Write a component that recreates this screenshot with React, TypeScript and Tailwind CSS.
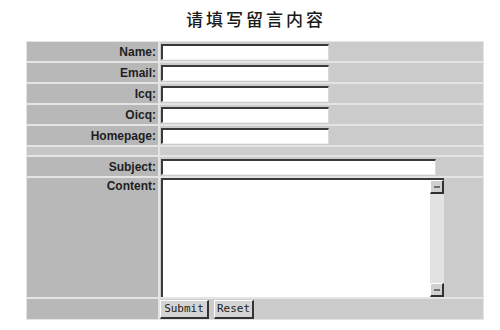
import React from "react";

const fields = ["Name", "Email", "Icq", "Oicq", "Homepage"];

function Label({ text }: { text: string }) {
  return (
    <div className="bg-[#b8b8b8] flex items-center justify-end pr-[2px] text-[12px] font-bold text-[#1e1e1e]">
      {text}:
    </div>
  );
}

function TextBox({ width }: { width: string }) {
  return (
    <div
      className={`${width} h-[16px] bg-white border-t-2 border-l-2 border-t-[#3a3a3a] border-l-[#3a3a3a] border-r border-b border-r-[#d8d8d8] border-b-[#f0f0f0]`}
    />
  );
}

function ScrollArrow({ up }: { up?: boolean }) {
  return (
    <div className="w-[14px] h-[14px] bg-[#d0d0d0] border-r-2 border-b-2 border-[#303030] border-t border-l border-t-white border-l-white flex items-center justify-center">
      <div className={`w-[6px] h-[2px] bg-[#707070] ${up ? "" : "mt-[1px]"}`} />
    </div>
  );
}

export default function App() {
  return (
    <div
      className="w-[500px] h-[330px] bg-white"
      style={{ fontFamily: '"Liberation Sans", Arial, sans-serif' }}
    >
      {/* 标题 */}
      <div
        className="pt-[8px] pl-[12px] text-center text-[17px] font-medium tracking-[3px] text-[#1a1a1a] leading-[22px]"
        style={{ fontFamily: '"Noto Sans CJK SC", sans-serif' }}
      >
        请填写留言内容
      </div>

      {/* 表单 */}
      <div className="ml-[26px] mt-[11px] w-[458px] bg-[#e4e4e4] p-[1px] grid grid-cols-[131px_1fr] gap-[2px]">
        {fields.map((f) => (
          <React.Fragment key={f}>
            <Label text={f} />
            <div className="h-[19px] bg-[#cbcbcb] flex items-center pl-[1px]">
              <TextBox width="w-[168px]" />
            </div>
          </React.Fragment>
        ))}

        {/* 分隔行 */}
        <div className="h-[8px] bg-[#c6c6c6]" />
        <div className="h-[8px] bg-[#cdcdcd]" />

        <Label text="Subject" />
        <div className="h-[19px] bg-[#cbcbcb] flex items-center pl-[1px]">
          <TextBox width="w-[275px]" />
        </div>

        <div className="bg-[#b8b8b8] flex justify-end pr-[2px] pt-[1px] text-[12px] font-bold text-[#1e1e1e] leading-[15px]">
          Content:
        </div>
        <div className="h-[119px] bg-[#cbcbcb] pl-[1px]">
          <div className="w-[283px] h-[119px] bg-white border-t-2 border-l-2 border-[#3a3a3a] flex justify-end">
            <div className="w-[14px] h-full bg-[#e2e2e2] flex flex-col justify-between">
              <ScrollArrow up />
              <ScrollArrow />
            </div>
          </div>
        </div>

        <div className="h-[20px] bg-[#b8b8b8]" />
        <div
          className="h-[20px] bg-[#cbcbcb] flex items-center gap-[5px] text-[11px] text-[#222]"
          style={{ fontFamily: '"DejaVu Sans Mono", monospace' }}
        >
          <button className="w-[49px] h-[19px] bg-[#d4d4d4] border-t border-l border-white border-r-2 border-b-2 border-r-[#333] border-b-[#333] leading-none">
            Submit
          </button>
          <button className="w-[40px] h-[19px] bg-[#d4d4d4] border-t border-l border-white border-r-2 border-b-2 border-r-[#333] border-b-[#333] leading-none">
            Reset
          </button>
        </div>
      </div>
    </div>
  );
}
